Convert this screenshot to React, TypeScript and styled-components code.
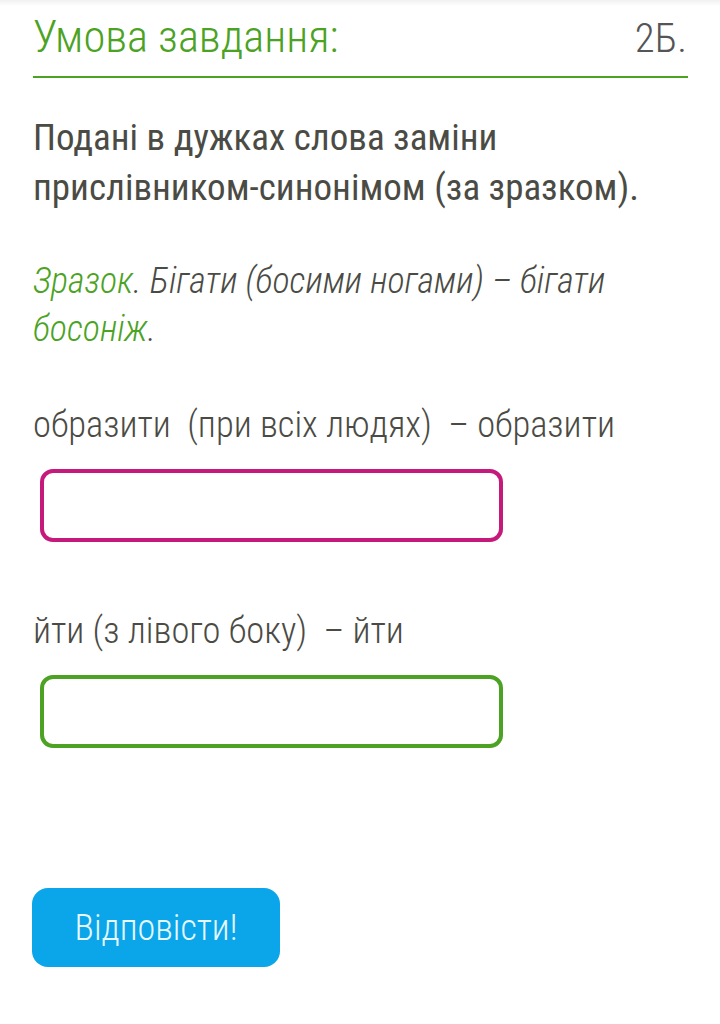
import styled, { createGlobalStyle } from "styled-components";

const GlobalStyle = createGlobalStyle`
  html, body {
    margin: 0;
    background: #ffffff;
  }
  body {
    font-family: "Roboto", "Noto Sans", sans-serif;
    font-stretch: 75%;
  }
`;

const Page = styled.div`
  position: relative;
  min-height: 1024px;
  padding: 0 32px 0 33px;
  box-sizing: border-box;
  background: #fff;

  &::before {
    content: "";
    position: absolute;
    top: 0;
    left: 0;
    right: 0;
    height: 6px;
    background: linear-gradient(180deg, rgba(0, 0, 0, 0.06), rgba(0, 0, 0, 0));
  }
`;

const Header = styled.div`
  display: flex;
  justify-content: space-between;
  align-items: baseline;
  padding-top: 11px;
  height: 65px;
  border-bottom: 2px solid #4ba223;
`;

const Title = styled.span`
  font-size: 44.5px;
  font-weight: 300;
  color: #4ba223;
`;

const Points = styled.span`
  font-size: 41px;
  font-weight: 300;
  color: #555;
  margin-right: 1px;
`;

const Task = styled.p`
  margin: 35px 0 0;
  font-size: 37px;
  line-height: 50px;
  font-weight: 400;
  color: #4b4b45;
`;

const Sample = styled.p`
  margin: 44px 0 0;
  font-size: 36px;
  line-height: 48px;
  font-weight: 300;
  font-style: italic;
  color: #4b4b45;
`;

const Green = styled.span`
  color: #4ba223;
`;

const Prompt = styled.p`
  margin: 0;
  font-size: 36.5px;
  line-height: 48px;
  font-weight: 300;
  color: #4b4b45;
  white-space: pre;
`;

const Exercise = styled.div<{ $top: number }>`
  display: flex;
  flex-direction: column;
  gap: 20px;
  margin-top: ${(p) => p.$top}px;
`;

const AnswerBox = styled.input<{ $color: string }>`
  display: block;
  width: 463px;
  height: 73px;
  margin-left: 7px;
  box-sizing: border-box;
  border: 4px solid ${(p) => p.$color};
  border-radius: 13px;
  background: #fff;
  outline: none;
  font-size: 32px;
  padding: 0 14px;
  font-family: inherit;
`;

const SubmitButton = styled.button`
  display: block;
  margin: 140px 0 0 -1px;
  width: 248px;
  height: 79px;
  border: 0;
  border-radius: 16px;
  background: #0aa6e9;
  color: #e6f7fd;
  font-family: "Roboto", "Noto Sans", sans-serif;
  font-stretch: 75%;
  font-size: 36px;
  font-weight: 300;
  cursor: pointer;
`;

export default function App() {
  return (
    <>
      <GlobalStyle />
      <Page>
        <Header>
          <Title>Умова завдання:</Title>
          <Points>2Б.</Points>
        </Header>

        <Task>
          Подані в дужках слова заміни
          <br />
          прислівником-синонімом (за зразком).
        </Task>

        <Sample>
          <Green>Зразок</Green>. Бігати (босими ногами) – бігати <Green>босоніж</Green>.
        </Sample>

        <Exercise $top={48}>
          <Prompt>образити  (при всіх людях)  – образити</Prompt>
          <AnswerBox $color="#c6197c" />
        </Exercise>

        <Exercise $top={65}>
          <Prompt>йти (з лівого боку)  – йти</Prompt>
          <AnswerBox $color="#4ba223" />
        </Exercise>

        <SubmitButton>Відповісти!</SubmitButton>
      </Page>
    </>
  );
}
